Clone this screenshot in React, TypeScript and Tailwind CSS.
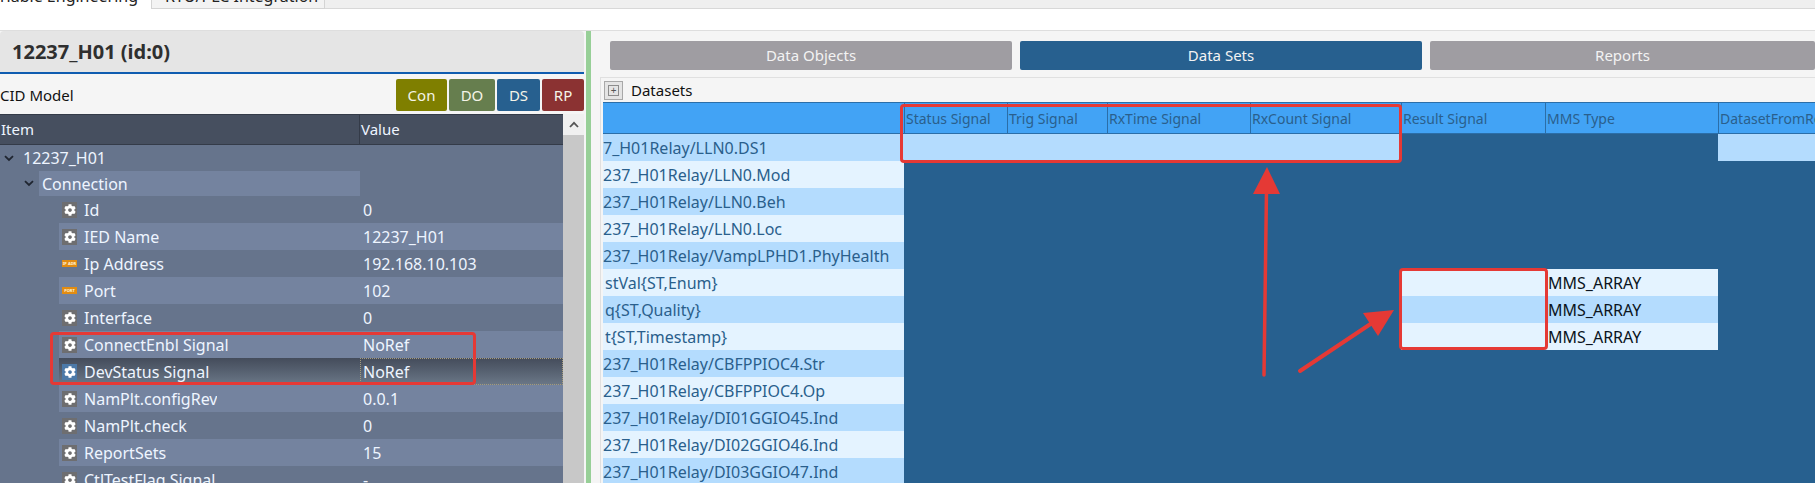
import React from "react";
import { FaCog } from "react-icons/fa";

const font = { fontFamily: '"Noto Sans", "Open Sans", sans-serif' };

function Gear({ selected }: { selected?: boolean }) {
  return (
    <span className={`flex h-[16px] w-[15px] shrink-0 items-center justify-center ${selected ? "bg-[#4c79a8]" : "bg-[#6e6e70]"}`}>
      <FaCog className="text-[12px] text-white" />
    </span>
  );
}

function Tag({ label }: { label: string }) {
  return (
    <span className="flex h-[7px] w-[15px] shrink-0 items-center justify-center overflow-hidden bg-[#e28c12] text-[4px] font-bold leading-none text-[#fff3d8]">
      {label}
    </span>
  );
}

function Chevron() {
  return (
    <svg width="10" height="7" viewBox="0 0 10 7" className="shrink-0">
      <path d="M1 1.2 L5 5 L9 1.2" fill="none" stroke="#1f2530" strokeWidth="1.8" />
    </svg>
  );
}

const treeRows: { name: string; value: string; icon: "gear" | "ip" | "port"; light?: boolean; selected?: boolean }[] = [
  { name: "Id", value: "0", icon: "gear" },
  { name: "IED Name", value: "12237_H01", icon: "gear", light: true },
  { name: "Ip Address", value: "192.168.10.103", icon: "ip" },
  { name: "Port", value: "102", icon: "port", light: true },
  { name: "Interface", value: "0", icon: "gear" },
  { name: "ConnectEnbl Signal", value: "NoRef", icon: "gear", light: true },
  { name: "DevStatus Signal", value: "NoRef", icon: "gear", selected: true },
  { name: "NamPlt.configRev", value: "0.0.1", icon: "gear", light: true },
  { name: "NamPlt.check", value: "0", icon: "gear" },
  { name: "ReportSets", value: "15", icon: "gear", light: true },
  { name: "CtlTestFlag Signal", value: "-", icon: "gear" },
];

function TreeRow({ row }: { row: (typeof treeRows)[number] }) {
  const bg = row.selected
    ? "bg-gradient-to-b from-[#444c5b] to-[#6b7888]"
    : row.light
      ? "bg-[#74839f]"
      : "";
  return (
    <div className="ml-[59px] flex h-[27px] shrink-0 items-center">
      <div className={`flex h-full w-full items-center ${bg}`}>
        <div className="flex w-[301px] shrink-0 items-center pl-[3px]">
          <span className="flex w-[22px] shrink-0 items-center">
            {row.icon === "gear" && <Gear selected={row.selected} />}
            {row.icon === "ip" && <Tag label="IP ADR" />}
            {row.icon === "port" && <Tag label="PORT" />}
          </span>
          <span className="truncate">{row.name}</span>
        </div>
        <div
          className={`flex h-full flex-1 items-center ${row.selected ? "border border-dotted border-[#a59b7c] pl-[2px]" : "pl-[3px]"}`}
        >
          {row.value}
        </div>
      </div>
    </div>
  );
}

const colWidths = ["w-[103px]", "w-[100px]", "w-[143px]", "w-[151px]", "w-[144px]", "w-[173px]"];
const headers = ["Status Signal", "Trig Signal", "RxTime Signal", "RxCount Signal", "Result Signal", "MMS Type"];

const dataRows: { label: string; indent?: boolean; kind?: "ds" | "leaf" }[] = [
  { label: "7_H01Relay/LLN0.DS1", kind: "ds" },
  { label: "237_H01Relay/LLN0.Mod" },
  { label: "237_H01Relay/LLN0.Beh" },
  { label: "237_H01Relay/LLN0.Loc" },
  { label: "237_H01Relay/VampLPHD1.PhyHealth" },
  { label: "stVal{ST,Enum}", indent: true, kind: "leaf" },
  { label: "q{ST,Quality}", indent: true, kind: "leaf" },
  { label: "t{ST,Timestamp}", indent: true, kind: "leaf" },
  { label: "237_H01Relay/CBFPPIOC4.Str" },
  { label: "237_H01Relay/CBFPPIOC4.Op" },
  { label: "237_H01Relay/DI01GGIO45.Ind" },
  { label: "237_H01Relay/DI02GGIO46.Ind" },
  { label: "237_H01Relay/DI03GGIO47.Ind" },
];

function DataRow({ row, index }: { row: (typeof dataRows)[number]; index: number }) {
  const tint = index % 2 === 0 ? "bg-[#b4dcfe]" : "bg-[#e4f3ff]";
  return (
    <div className="flex h-[27px] shrink-0">
      <div className={`flex w-[301px] shrink-0 items-center whitespace-nowrap text-[16px] text-[#2a5f8c] ${tint} ${row.indent ? "pl-[2px]" : ""}`}>
        {row.label}
      </div>
      {row.kind === "ds" && (
        <>
          <div className={`w-[497px] shrink-0 ${tint}`} />
          <div className="w-[317px] shrink-0" />
          <div className={`flex-1 ${tint}`} />
        </>
      )}
      {row.kind === "leaf" && (
        <>
          <div className="w-[497px] shrink-0" />
          <div className={`w-[144px] shrink-0 ${tint}`} />
          <div className={`flex w-[173px] shrink-0 items-center pl-[3px] text-[16px] text-[#0b1420] ${tint}`}>MMS_ARRAY</div>
        </>
      )}
    </div>
  );
}

function Btn({ label, cls }: { label: string; cls: string }) {
  return (
    <div className={`flex h-[32px] items-center justify-center rounded-[2px] text-[#f4f4e8] ${cls}`}>{label}</div>
  );
}

function TabButton({ label, cls }: { label: string; cls: string }) {
  return (
    <div className={`flex h-[29px] items-center justify-center rounded-[2px] text-[#f3f3f3] ${cls}`}>{label}</div>
  );
}

export default function App() {
  return (
    <div className="relative flex h-[483px] w-[1815px] flex-col overflow-hidden bg-white text-[15px]" style={font}>
      {/* top tabs */}
      <div className="flex h-[9px] shrink-0 overflow-hidden bg-[#efefef] text-[16px] leading-none text-[#222]">
        <div className="h-full w-[152px] border-r border-[#d4d4d4] bg-white">
          <div className="mt-[-12px] whitespace-nowrap">riable Engineering</div>
        </div>
        <div className="h-full w-[173px] border-r border-b border-[#d4d4d4] bg-[#f3f3f3]">
          <div className="mt-[-12px] whitespace-nowrap pl-[13px]">RTU/PLC Integration</div>
        </div>
        <div className="h-full flex-1 border-b border-[#d8d8d8]" />
      </div>
      <div className="h-[22px] shrink-0 border-b border-[#dedede] bg-white" />

      <div className="flex min-h-0 flex-1">
        {/* left panel */}
        <div className="flex w-[586px] shrink-0 flex-col bg-[#f5f5f5]">
          <div className="mr-[2px] flex h-[43px] shrink-0 items-center rounded-t-[4px] border-b-2 border-[#0f5cb0] bg-[#e5e5e5] pl-[12px] text-[20px] font-bold text-[#2f2f2f]">
            12237_H01 (id:0)
          </div>
          <div className="mr-[2px] flex h-[40px] shrink-0 items-center pt-[2px]">
            <span className="text-[15px] text-[#111]">CID Model</span>
            <div className="ml-auto flex gap-[2px]">
              <Btn label="Con" cls="w-[51px] bg-[#7f7f00]" />
              <Btn label="DO" cls="w-[46px] bg-[#667e4e]" />
              <Btn label="DS" cls="w-[43px] bg-[#27608f]" />
              <Btn label="RP" cls="w-[42px] bg-[#8b3232]" />
            </div>
          </div>
          <div className="mr-[2px] flex min-h-0 flex-1 text-[16px] text-[#eef5ff]">
            <div className="flex w-[563px] shrink-0 flex-col bg-[#66748c]">
              <div className="flex h-[31px] shrink-0 items-center border-y border-[#343b48] bg-[#464f5f] text-[15px]">
                <div className="flex h-full w-[360px] shrink-0 items-center border-r border-[#343b48] pl-[1px]">Item</div>
                <div className="pl-[1px]">Value</div>
              </div>
              <div className="flex h-[26px] shrink-0 items-center pl-[4px]">
                <Chevron />
                <span className="pl-[9px]">12237_H01</span>
              </div>
              <div className="flex h-[25px] shrink-0 items-center pl-[24px]">
                <Chevron />
                <div className="ml-[5px] flex h-full w-[321px] items-center bg-[#74839f] pl-[3px]">Connection</div>
              </div>
              {treeRows.map((r) => (
                <TreeRow key={r.name} row={r} />
              ))}
            </div>
            <div className="flex w-[21px] shrink-0 flex-col bg-[#c8c8c8]">
              <div className="flex h-[21px] shrink-0 items-center justify-center bg-[#f0f0f0]">
                <svg width="10" height="7" viewBox="0 0 10 7">
                  <path d="M1 6 L5 1.8 L9 6" fill="none" stroke="#555" strokeWidth="1.8" />
                </svg>
              </div>
            </div>
          </div>
        </div>

        {/* splitter */}
        <div className="w-[5px] shrink-0 bg-[#97cf97]" />

        {/* right panel */}
        <div className="flex min-w-0 flex-1 flex-col bg-[#f5f5f5]">
          <div className="flex h-[46px] shrink-0 gap-[8px] pl-[19px] pt-[10px]">
            <TabButton label="Data Objects" cls="w-[402px] bg-[#9f9da2]" />
            <TabButton label="Data Sets" cls="w-[402px] bg-[#27608f]" />
            <TabButton label="Reports" cls="flex-1 bg-[#9f9da2]" />
          </div>
          <div className="ml-[9px] flex min-h-0 flex-1 flex-col border-l border-t border-[#e0e0e0]">
            <div className="flex h-[24px] shrink-0 items-center pl-[3px] text-[15px] text-[#111]">
              <span className="flex h-[19px] w-[19px] shrink-0 items-center justify-center border border-[#a8a8a8] bg-[#e4e4e4]">
                <span className="flex h-[11px] w-[11px] items-center justify-center border border-[#8c8c8c] text-[10px] leading-none text-[#555]">+</span>
              </span>
              <span className="pl-[8px]">Datasets</span>
            </div>
            <div className="ml-[2px] flex min-h-0 flex-1 flex-col bg-[#27608f]">
              <div className="flex h-[32px] shrink-0 border-y border-[#2b6ea8] bg-[#42a3f5] text-[14px] text-[#2a5f8c]">
                <div className="w-[301px] shrink-0" />
                {headers.map((h, i) => (
                  <div key={h} className={`flex shrink-0 items-center border-l border-[#2b6ea8] whitespace-nowrap pl-[1px] ${colWidths[i]}`}>
                    {h}
                  </div>
                ))}
                <div className="flex flex-1 items-center overflow-hidden whitespace-nowrap border-l border-[#2b6ea8] pl-[1px]">DatasetFromRe</div>
              </div>
              {dataRows.map((r, i) => (
                <DataRow key={r.label} row={r} index={i} />
              ))}
            </div>
          </div>
        </div>
      </div>

      {/* annotations */}
      <div className="absolute left-[50px] top-[332px] h-[53px] w-[426px] rounded-[4px] border-[3px] border-[#e53935]" />
      <div className="absolute left-[900px] top-[104px] h-[59px] w-[502px] rounded-[4px] border-[3px] border-[#e53935]" />
      <div className="absolute left-[1399px] top-[268px] h-[82px] w-[149px] rounded-[4px] border-[3px] border-[#e53935]" />
      <svg className="absolute left-0 top-0" width="1815" height="483" viewBox="0 0 1815 483">
        <line x1="1264" y1="375" x2="1266.5" y2="190" stroke="#e53935" strokeWidth="3.5" strokeLinecap="round" />
        <polygon points="1267,167 1253,194 1280,194" fill="#e53935" />
        <line x1="1300" y1="371" x2="1375" y2="321" stroke="#e53935" strokeWidth="4" strokeLinecap="round" />
        <polygon points="1394,310 1363,313 1378,336" fill="#e53935" />
      </svg>
    </div>
  );
}
